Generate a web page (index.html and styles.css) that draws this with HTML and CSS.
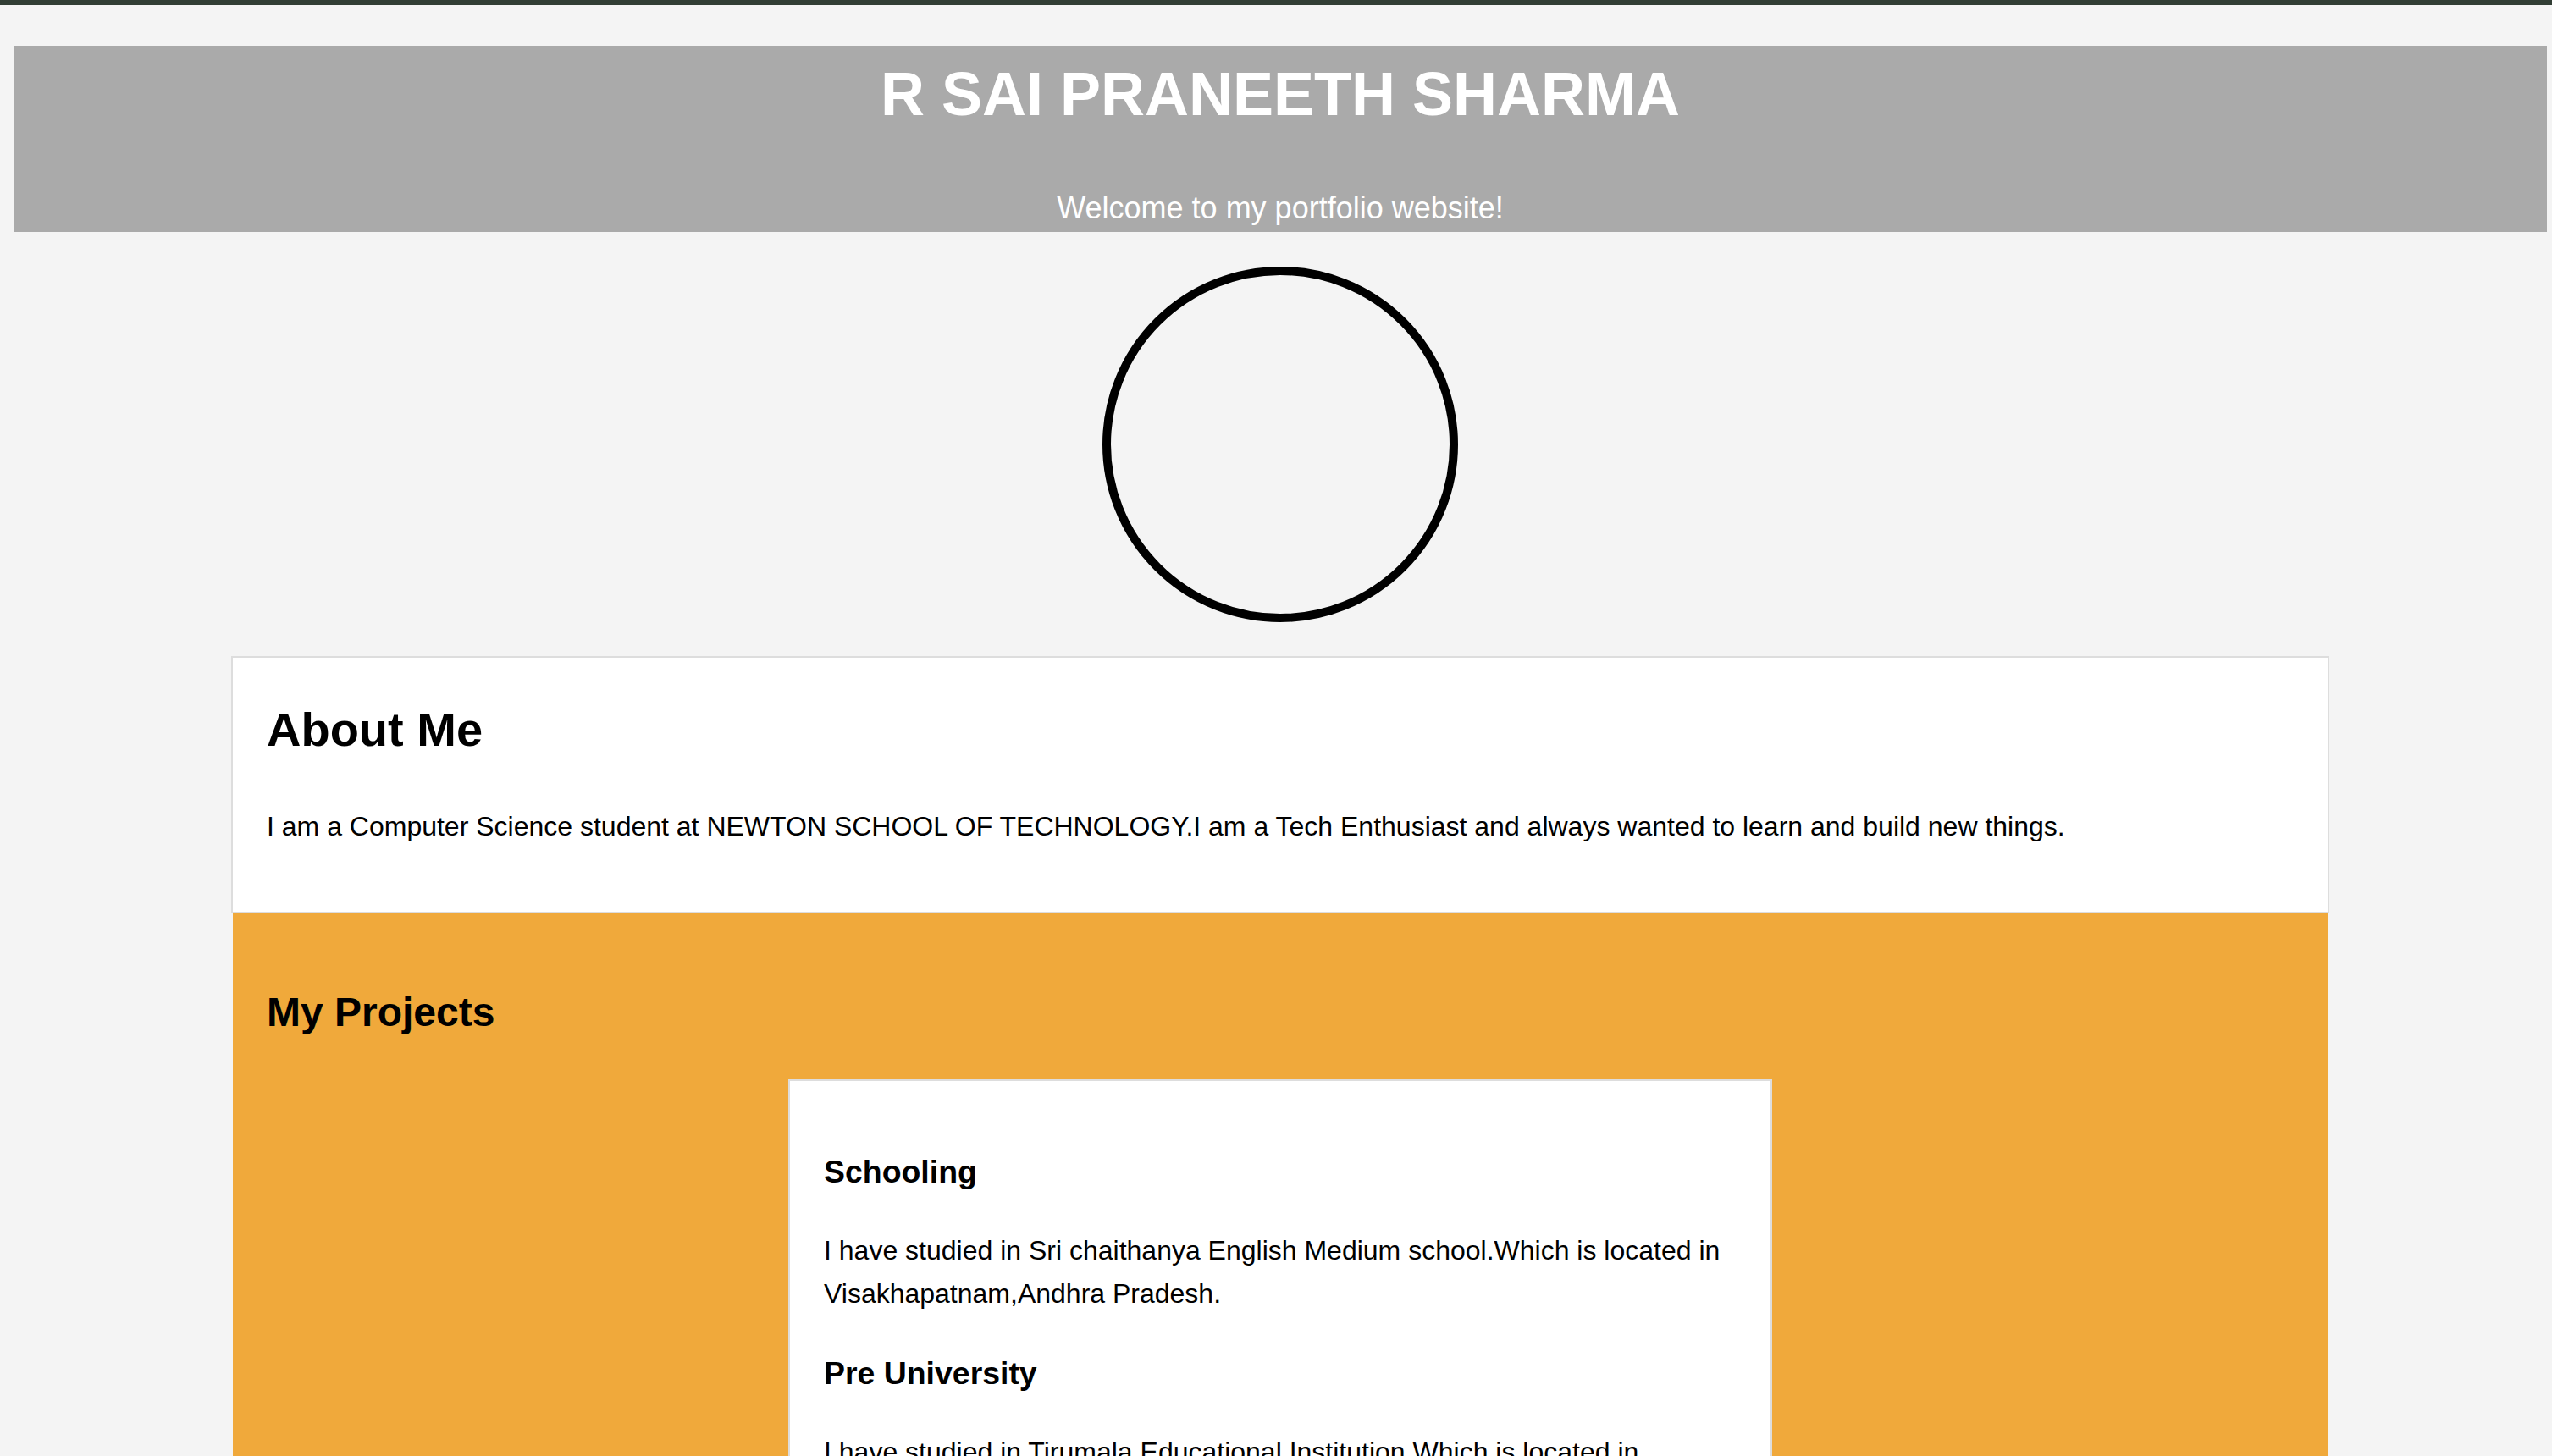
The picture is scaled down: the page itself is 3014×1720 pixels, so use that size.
FILE: index.html
```html
<!DOCTYPE html>
<html lang="en">
<head>
<meta charset="utf-8">
<title>R Sai Praneeth Sharma - Portfolio</title>
<link rel="stylesheet" href="styles.css">
</head>
<body>
<div class="topbar"></div>
<div class="page">
  <header class="hero">
    <h1 class="hero-title">R SAI PRANEETH SHARMA</h1>
    <p class="hero-sub">Welcome to my portfolio website!</p>
  </header>
  <div class="avatar"></div>
  <main class="content">
    <section class="about">
      <h2 class="about-title">About Me</h2>
      <p class="about-text">I am a Computer Science student at NEWTON SCHOOL OF TECHNOLOGY.I am a Tech Enthusiast and always wanted to learn and build new things.</p>
    </section>
    <section class="projects">
      <h2 class="projects-title">My Projects</h2>
      <div class="project-card">
        <h3 class="project-title">Schooling</h3>
        <p class="project-text">I have studied in Sri chaithanya English Medium school.Which is located in Visakhapatnam,Andhra Pradesh.</p>
        <h3 class="project-title">Pre University</h3>
        <p class="project-text">I have studied in Tirumala Educational Institution.Which is located in Visakhapatnam,Andhra Pradesh.</p>
      </div>
    </section>
  </main>
</div>
</body>
</html>
```

FILE: styles.css
```css
html, body {
  margin: 0;
  padding: 0;
}

body {
  background: #f4f4f4;
  font-family: "Liberation Sans", Arial, Helvetica, sans-serif;
  color: #000;
}

.topbar {
  height: 6px;
  background: #323e35;
}

.page {
  width: 2992px;
  margin: 0 0 0 16px;
}

.hero {
  margin-top: 48px;
  background: #aaaaaa;
  color: #fff;
  text-align: center;
  padding: 17px 0 8px;
}

.hero-title {
  margin: 0;
  font-size: 72px;
  line-height: 80px;
  font-weight: bold;
}

.hero-sub {
  margin: 75px 0 0;
  font-size: 36px;
  line-height: 40px;
}

.avatar {
  width: 400px;
  height: 400px;
  border: 10px solid #000;
  border-radius: 50%;
  margin: 41px auto 40px;
}

.content {
  width: 2478px;
  margin: 0 auto;
}

.about {
  background: #fff;
  border: 2px solid #dddddd;
  padding: 40px;
}

.about-title {
  margin: 13px 0 57px;
  font-size: 56px;
  line-height: 64px;
  font-weight: bold;
}

.about-text {
  margin: 0 0 35px;
  font-size: 32px;
  line-height: 51.2px;
}

.projects {
  background: #f0a93b;
  margin: 0 2px;
  padding: 40px 40px 80px;
}

.projects-title {
  margin: 49px 0 51px;
  font-size: 48px;
  line-height: 56px;
  font-weight: bold;
}

.project-card {
  box-sizing: border-box;
  width: 1162px;
  margin: 0 auto;
  background: #fff;
  border: 2px solid #dddddd;
  padding: 40px;
}

.project-title {
  margin: 46px 0;
  font-size: 37.44px;
  line-height: 43px;
  font-weight: bold;
}

.project-title:first-child {
  margin-top: 46px;
}

.project-text {
  margin: 32px 0;
  font-size: 32px;
  line-height: 51.2px;
}
```
